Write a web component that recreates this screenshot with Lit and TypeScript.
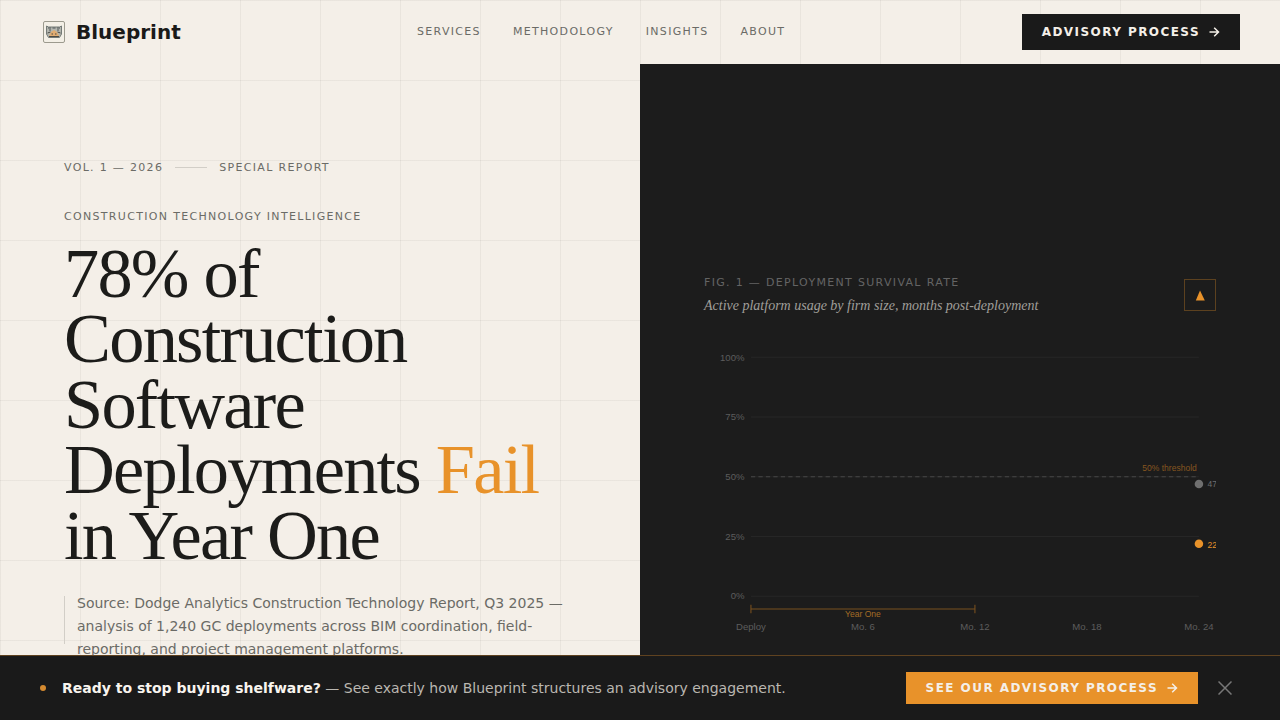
import { LitElement, html, css, svg } from "lit";
import { customElement, state } from "lit/decorators.js";

const arrow = html`<svg class="arrow" viewBox="0 0 12 12" width="12" height="12" aria-hidden="true">
  <path d="M1.5 6h9M6.2 1.700l4.300 4.300-4.300 4.300" fill="none" stroke="currentColor" stroke-width="1.5" />
</svg>`;

@customElement("survival-chart")
export class SurvivalChart extends LitElement {
  static styles = css`
    :host { display: block; }
    .chart { display: block; width: 100%; height: auto; overflow: hidden; font-family: "Liberation Sans", Arial, sans-serif; }
    .grid { stroke: #262626; stroke-width: 1; }
    .threshold { stroke: #474747; stroke-width: 1; stroke-dasharray: 4 3; }
    .axis { fill: #5c5c5c; font-size: 9px; }
    .note { fill: #865620; font-size: 8px; }
    .year { fill: #a56c26; font-size: 8px; }
    .bracket { stroke: #79501f; stroke-width: 1; fill: none; }
    .end { text-anchor: end; }
    .mid { text-anchor: middle; }
    .large { fill: #6f6f6f; font-size: 8px; }
    .small { fill: #e8922a; font-size: 8px; }
  `;

  private y(value: number) {
    return 20 + (1 - value / 100) * 224;
  }

  render() {
    const months = ["Deploy", "Mo. 6", "Mo. 12", "Mo. 18", "Mo. 24"];
    return html`<svg class="chart" viewBox="0 0 480 284" role="img" aria-label="Active platform usage over 24 months">
      ${[100, 75, 50, 25, 0].map(
        (v) => svg`
          <line class="grid" x1="44" x2="464" y1=${this.y(v)} y2=${this.y(v)} />
          <text class="axis end" x="38" y=${this.y(v) + 3}>${v}%</text>`
      )}
      <line class="threshold" x1="44" x2="464" y1="132" y2="132" />
      <text class="note end" x="462" y="127">50% threshold</text>
      ${months.map((m, i) => svg`<text class="axis mid" x=${44 + i * 105} y="276">${m}</text>`)}
      <path class="bracket" d="M44 252v8M44 256H254M254 252v8" />
      <text class="year mid" x="149" y="263">Year One</text>
      <circle class="large" cx="464" cy="138.7" r="4" />
      <text class="large" x="472" y="142">47%</text>
      <circle class="small" cx="464" cy="194.7" r="4" />
      <text class="small" x="472" y="199">22%</text>
    </svg>`;
  }
}

@customElement("app-root")
export class AppRoot extends LitElement {
  @state() private bannerOpen = true;

  static styles = css`
    :host {
      display: block;
      min-height: 100vh;
      box-sizing: border-box;
      font-family: "DejaVu Sans", sans-serif;
      color: #1c1c1a;
      background-color: #f4efe8;
      background-image:
        linear-gradient(to right, rgba(28, 28, 26, 0.05) 1px, transparent 1px),
        linear-gradient(to bottom, rgba(28, 28, 26, 0.05) 1px, transparent 1px);
      background-size: 80px 80px;
    }
    .header {
      display: flex;
      justify-content: space-between;
      align-items: center;
      height: 64px;
      padding: 0 40px;
    }
    .brand {
      display: flex;
      align-items: center;
      gap: 8px;
      color: #1a1a18;
      font-size: 20px;
      font-weight: 700;
      text-decoration: none;
    }
    .nav { display: flex; gap: 32px; }
    .nav a {
      color: #6b6b66;
      font-size: 11px;
      line-height: 16px;
      letter-spacing: 0.12em;
      text-decoration: none;
      text-transform: uppercase;
    }
    .cta {
      display: flex;
      align-items: center;
      gap: 8px;
      box-sizing: border-box;
      padding: 0 20px;
      border: 0;
      font-family: inherit;
      font-size: 12px;
      font-weight: 700;
      letter-spacing: 0.12em;
      text-transform: uppercase;
      white-space: nowrap;
      color: #f4efe8;
      cursor: pointer;
    }
    .arrow { flex: none; }
    .dark { height: 36px; background: #1a1a1a; }
    .amber { height: 32px; background: #e8922a; }
    .hero {
      display: grid;
      grid-template-columns: 1fr 1fr;
      min-height: calc(100vh - 64px);
    }
    .story { padding: 95px 64px 0; }
    .meta { display: flex; align-items: center; gap: 12px; }
    .rule { width: 32px; height: 1px; background: #d2cec7; }
    .label {
      margin: 0;
      color: #6b6b66;
      font-size: 11px;
      line-height: 17px;
      letter-spacing: 0.12em;
      text-transform: uppercase;
    }
    .kicker { margin-top: 32px; }
    .title {
      margin: 16px 0 0;
      font-family: "Liberation Serif", "Times New Roman", serif;
      font-size: clamp(48px, 5.5vw, 88px);
      font-weight: 400;
      line-height: 0.93;
      letter-spacing: -0.025em;
    }
    .accent { color: #e8922a; }
    .source { display: flex; gap: 12px; margin-top: 24px; }
    .bar { flex: none; width: 1px; height: 48px; margin-top: 4px; background: #d2cec7; }
    .text { margin: 0; color: #6b6b66; font-size: 14px; line-height: 23px; }
    .figure {
      box-sizing: border-box;
      margin: 0;
      padding: 210px 64px 0;
      background: #1c1c1c;
    }
    .caption { display: flex; justify-content: space-between; align-items: flex-start; margin-bottom: 20px; }
    .figure .label { color: #646464; }
    .subtitle {
      margin: 5px 0 0;
      color: #a09f9a;
      font-family: "Liberation Serif", "Times New Roman", serif;
      font-size: 14px;
      line-height: 20px;
      font-style: italic;
    }
    .badge {
      display: flex;
      align-items: center;
      justify-content: center;
      box-sizing: border-box;
      width: 32px;
      height: 32px;
      margin-top: 5px;
      border: 1px solid #5c411f;
    }
    .banner {
      position: fixed;
      inset: auto 0 0;
      display: flex;
      align-items: center;
      box-sizing: border-box;
      padding: 16px 40px;
      border-top: 1px solid #5f4220;
      background: #1a1a1a;
    }
    .dot { flex: none; width: 6px; height: 6px; margin-right: 16px; border-radius: 50%; background: #d48a30; }
    .message { flex: 1; margin: 0; color: #bab7b1; font-size: 14px; line-height: 20px; }
    .message strong { color: #f8f4ee; }
    .close {
      display: flex;
      margin-left: 12px;
      padding: 8px;
      border: 0;
      background: none;
      color: #777;
      cursor: pointer;
    }
  `;

  render() {
    return html`
      <header class="header">
        <a class="brand" href="#">
          <svg width="28" height="28" viewBox="0 0 28 28" aria-hidden="true">
            <rect x="3.5" y="3.5" width="21" height="21" rx="1.5" fill="#f3efe6" stroke="#9c9a8e" />
            <path d="M6.500 8l2 1h11l2-1v8l-2 3.500h-11l-2-3.500z" fill="#b3b5ae" stroke="#747a77" />
            <path d="M8 10h3M12.500 10h3M17 10h3M9 12h2M17 12h2" fill="none" stroke="#50595b" />
            <path d="M9 18l2-4 3-2 3 2 2 4z" fill="#e0ac72" />
            <path d="M7.500 15l3-1M20.500 15l-3-1M11.500 16h1.500M15 16h1.500M9 18.500h10" stroke="#4c4b45" fill="none" />
          </svg>
          <span>Blueprint</span>
        </a>
        <nav class="nav" aria-label="Main">
          <a href="#services">Services</a>
          <a href="#methodology">Methodology</a>
          <a href="#insights">Insights</a>
          <a href="#about">About</a>
        </nav>
        <button class="cta dark">Advisory Process ${arrow}</button>
      </header>

      <main class="hero">
        <section class="story">
          <div class="meta">
            <p class="label">Vol. 1 — 2026</p>
            <span class="rule"></span>
            <p class="label">Special Report</p>
          </div>
          <p class="label kicker">Construction Technology Intelligence</p>
          <h1 class="title">
            78% of<br />Construction<br />Software<br />Deployments <span class="accent">Fail</span><br />in Year One
          </h1>
          <div class="source">
            <span class="bar"></span>
            <p class="text">
              Source: Dodge Analytics Construction Technology Report, Q3 2025 — analysis of 1,240 GC
              deployments across BIM coordination, field-reporting, and project management platforms.
            </p>
          </div>
        </section>

        <figure class="figure">
          <figcaption class="caption">
            <div>
              <p class="label">Fig. 1 — Deployment Survival Rate</p>
              <p class="subtitle">Active platform usage by firm size, months post-deployment</p>
            </div>
            <span class="badge">
              <svg width="10" height="12" viewBox="0 0 10 12" aria-hidden="true">
                <path d="M5 1.500L9.800 11.500h-9z" fill="#e8922a" />
              </svg>
            </span>
          </figcaption>
          <survival-chart></survival-chart>
        </figure>
      </main>

      ${this.bannerOpen
        ? html`<aside class="banner">
            <span class="dot"></span>
            <p class="message">
              <strong>Ready to stop buying shelfware?</strong> — See exactly how Blueprint structures an
              advisory engagement.
            </p>
            <button class="cta amber">See Our Advisory Process ${arrow}</button>
            <button class="close" aria-label="Dismiss" @click=${() => (this.bannerOpen = false)}>
              <svg width="14" height="14" viewBox="0 0 14 14" aria-hidden="true">
                <path d="M0.500 0.500l13 13M13.500 0.500l-13 13" stroke="currentColor" stroke-width="1.500" />
              </svg>
            </button>
          </aside>`
        : null}
    `;
  }
}
